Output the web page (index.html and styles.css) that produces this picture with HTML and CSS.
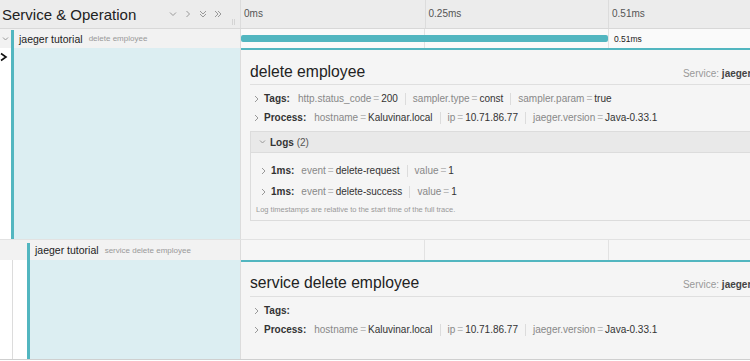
FILE: index.html
```html
<!DOCTYPE html>
<html lang="en">
<head>
    <meta charset="UTF-8">
    <title>Trace detail</title>
    <link rel="stylesheet" href="styles.css">
</head>
<body>
    <div class="trace">
        <!-- header -->
        <div class="row header">
            <div class="name-col">
                <span class="header-title">Service &amp; Operation</span>
                <span class="tools">
                    <svg width="8" height="8" viewBox="0 0 8 8"><path d="M1 2.5l3 3 3-3"/></svg>
                    <svg width="8" height="8" viewBox="0 0 8 8"><path d="M2.5 1l3 3-3 3"/></svg>
                    <svg width="8" height="8" viewBox="0 0 8 8"><path d="M1 1l3 3 3-3M1 4l3 3 3-3"/></svg>
                    <svg width="8" height="8" viewBox="0 0 8 8"><path d="M1 1l3 3-3 3M4 1l3 3-3 3"/></svg>
                </span>
                <span class="resizer"></span>
            </div>
            <div class="time-col ticks">
                <span class="tick">0ms</span>
                <span class="tick">0.25ms</span>
                <span class="tick">0.51ms</span>
            </div>
        </div>

        <!-- span 1 -->
        <div class="row span-row">
            <div class="name-col">
                <span class="toggle">
                    <svg width="7" height="6" viewBox="0 0 7 6"><path d="M1 1.5l2.5 2.5 2.5-2.5"/></svg>
                </span>
                <span class="accent"></span>
                <span class="svc">jaeger tutorial</span>
                <span class="op">delete employee</span>
            </div>
            <div class="time-col grid">
                <span class="bar" style="width: 367px"></span>
                <span class="bar-label">0.51ms</span>
            </div>
        </div>

        <div class="row detail-row">
            <div class="name-col detail-left">
                <span class="toggle open">
                    <svg width="8" height="10" viewBox="0 0 8 10"><path d="M1 1.5l5 3.5-5 3.5"/></svg>
                </span>
                <span class="accent"></span>
                <span class="fill"></span>
            </div>
            <div class="time-col panel">
                <div class="panel-inner">
                    <div class="panel-title">
                        <span class="op-title">delete employee</span>
                        <span class="service">Service: <b>jaeger tutorial</b></span>
                    </div>
                    <div class="kv-list">
                        <div class="kv-row">
                            <svg class="chev" width="5" height="8" viewBox="0 0 5 8"><path d="M1 1l3 3-3 3"/></svg>
                            <span class="kv-label">Tags:</span>
                            <span class="kv"><span class="k">http.status_code</span><span class="eq">=</span><span class="v">200</span></span>
                            <span class="kv"><span class="k">sampler.type</span><span class="eq">=</span><span class="v">const</span></span>
                            <span class="kv"><span class="k">sampler.param</span><span class="eq">=</span><span class="v">true</span></span>
                        </div>
                        <div class="kv-row">
                            <svg class="chev" width="5" height="8" viewBox="0 0 5 8"><path d="M1 1l3 3-3 3"/></svg>
                            <span class="kv-label">Process:</span>
                            <span class="kv"><span class="k">hostname</span><span class="eq">=</span><span class="v">Kaluvinar.local</span></span>
                            <span class="kv"><span class="k">ip</span><span class="eq">=</span><span class="v">10.71.86.77</span></span>
                            <span class="kv"><span class="k">jaeger.version</span><span class="eq">=</span><span class="v">Java-0.33.1</span></span>
                        </div>
                    </div>

                    <div class="logs">
                        <div class="logs-head">
                            <svg class="chev-down" width="7" height="6" viewBox="0 0 7 6"><path d="M1 1.5l2.5 2.5 2.5-2.5"/></svg>
                            <b>Logs</b>&nbsp;<span>(2)</span>
                        </div>
                        <div class="logs-body">
                            <div class="log-row">
                                <svg class="chev" width="5" height="8" viewBox="0 0 5 8"><path d="M1 1l3 3-3 3"/></svg>
                                <span class="kv-label">1ms:</span>
                                <span class="kv"><span class="k">event</span><span class="eq">=</span><span class="v">delete-request</span></span>
                                <span class="kv"><span class="k">value</span><span class="eq">=</span><span class="v">1</span></span>
                            </div>
                            <div class="log-row">
                                <svg class="chev" width="5" height="8" viewBox="0 0 5 8"><path d="M1 1l3 3-3 3"/></svg>
                                <span class="kv-label">1ms:</span>
                                <span class="kv"><span class="k">event</span><span class="eq">=</span><span class="v">delete-success</span></span>
                                <span class="kv"><span class="k">value</span><span class="eq">=</span><span class="v">1</span></span>
                            </div>
                            <div class="logs-note">Log timestamps are relative to the start time of the full trace.</div>
                        </div>
                    </div>
                </div>
            </div>
        </div>

        <!-- span 2 -->
        <div class="row span-row child">
            <div class="name-col">
                <span class="indent"></span>
                <span class="accent"></span>
                <span class="svc">jaeger tutorial</span>
                <span class="op">service delete employee</span>
            </div>
            <div class="time-col grid"></div>
        </div>

        <div class="row detail-row child last">
            <div class="name-col detail-left">
                <span class="indent"></span>
                <span class="accent"></span>
                <span class="fill"></span>
            </div>
            <div class="time-col panel">
                <div class="panel-inner">
                    <div class="panel-title">
                        <span class="op-title">service delete employee</span>
                        <span class="service">Service: <b>jaeger tutorial</b></span>
                    </div>
                    <div class="kv-list">
                        <div class="kv-row">
                            <svg class="chev" width="5" height="8" viewBox="0 0 5 8"><path d="M1 1l3 3-3 3"/></svg>
                            <span class="kv-label">Tags:</span>
                        </div>
                        <div class="kv-row">
                            <svg class="chev" width="5" height="8" viewBox="0 0 5 8"><path d="M1 1l3 3-3 3"/></svg>
                            <span class="kv-label">Process:</span>
                            <span class="kv"><span class="k">hostname</span><span class="eq">=</span><span class="v">Kaluvinar.local</span></span>
                            <span class="kv"><span class="k">ip</span><span class="eq">=</span><span class="v">10.71.86.77</span></span>
                            <span class="kv"><span class="k">jaeger.version</span><span class="eq">=</span><span class="v">Java-0.33.1</span></span>
                        </div>
                    </div>
                </div>
            </div>
        </div>
    </div>
</body>
</html>
```

FILE: styles.css
```css
* {
    box-sizing: border-box;
}

body {
    margin: 0;
    width: 750px;
    height: 361px;
    overflow: hidden;
    font-family: "Liberation Sans", Arial, sans-serif;
    color: #333;
    background: #fff;
}

.trace {
    width: 975px;
}

.row {
    display: flex;
}

.name-col {
    width: 241px;
    flex: none;
    display: flex;
    border-right: 1px solid #dcdcdc;
}

.time-col {
    flex: 1;
}

svg path {
    fill: none;
    stroke: #999;
    stroke-width: 1;
}

/* header */
.header {
    height: 29px;
    background: #ececec;
    border-bottom: 1px solid #d8d8d8;
}

.header .name-col {
    align-items: center;
    padding-left: 2px;
    position: relative;
}

.header-title {
    font-size: 15px;
    color: #222;
}

.tools {
    margin-left: auto;
    margin-right: 18px;
    display: flex;
    gap: 7px;
}

.resizer {
    position: absolute;
    right: 5px;
    top: 19px;
    width: 3px;
    height: 6px;
    border-left: 1px solid #d4d4d4;
    border-right: 1px solid #d4d4d4;
}

.ticks {
    display: flex;
}

.tick {
    width: 183.5px;
    flex: none;
    padding-left: 3px;
    font-size: 10px;
    line-height: 28px;
    color: #555;
}

.tick + .tick {
    border-left: 1px solid #dcdcdc;
}

/* span rows */
.span-row {
    height: 19px;
}

.span-row .name-col {
    background: #f2f2f2;
    align-items: center;
}

.toggle {
    width: 11px;
    height: 100%;
    flex: none;
    display: flex;
    align-items: center;
    padding-left: 2px;
}

.accent {
    width: 3px;
    height: 100%;
    flex: none;
    background: #52b6c0;
}

.span-row .accent {
    align-self: flex-end;
    height: 18px;
}

.svc {
    padding-left: 5px;
    font-size: 10.5px;
    color: #222;
}

.op {
    padding-left: 6px;
    font-size: 8px;
    color: #999;
}

.grid {
    display: flex;
    align-items: center;
    background-color: #fafafa;
    background-image: repeating-linear-gradient(90deg, transparent 0 183px, #e2e2e2 183px 184px);
}

.bar {
    height: 7px;
    border-radius: 2px;
    background: #52b6c0;
}

.bar-label {
    margin-left: 6px;
    font-size: 8.5px;
    color: #222;
}

/* detail rows */
.detail-left {
    background: #fff;
    align-items: stretch;
}

.toggle.open {
    padding-left: 0;
    align-items: flex-start;
    padding-top: 4px;
}

.toggle.open path {
    stroke: #111;
    stroke-width: 1.6;
}

.fill {
    flex: 1;
    background: #dceef2;
}

.panel {
    background: #f5f5f5;
    border-top: 2px solid #52b6c0;
    padding: 0 0 18px 9px;
}

.panel-inner {
    width: 538px;
}

.panel-title {
    display: flex;
    align-items: baseline;
    justify-content: space-between;
    padding: 12px 0 2px;
    border-bottom: 1px solid #dfdfdf;
}

.op-title {
    font-size: 15.7px;
    line-height: 20px;
    color: #222;
}

.service {
    font-size: 10px;
    color: #999;
}

.service b {
    color: #444;
}

.kv-list {
    padding-top: 4px;
}

.kv-row,
.log-row {
    display: flex;
    align-items: center;
    font-size: 10px;
    white-space: nowrap;
}

.kv-row {
    height: 19px;
}

.kv-row .chev {
    margin-left: 4px;
    margin-right: 5px;
}

.kv-label {
    font-weight: bold;
    color: #333;
    margin-right: 8px;
}

.kv {
    padding: 0 7px;
    line-height: 12px;
}

.kv:nth-child(3) {
    padding-left: 0;
}

.kv + .kv {
    border-left: 1px solid #dcdcdc;
}

.k {
    color: #888;
}

.eq {
    color: #bbb;
    margin: 0 2px;
}

.v {
    color: #333;
}

/* logs */
.logs {
    margin-top: 4px;
    border: 1px solid #dcdcdc;
}

.logs-head {
    height: 21px;
    display: flex;
    align-items: center;
    padding-left: 8px;
    background: #e9e9e9;
    border-bottom: 1px solid #dcdcdc;
    font-size: 10px;
}

.logs-head .chev-down {
    margin-right: 4px;
}

.logs-head span {
    color: #555;
}

.logs-body {
    padding: 7px 0 5px;
}

.log-row {
    height: 21px;
}

.log-row .chev {
    margin-left: 10px;
    margin-right: 5px;
}

.log-row .kv-label {
    margin-right: 7px;
}

.logs-note {
    margin-top: 3px;
    padding-left: 5px;
    font-size: 7.5px;
    line-height: 10px;
    color: #999;
}

/* child span */
.child .indent {
    width: 13px;
    flex: none;
    border-right: 1px solid #dcdcdc;
    margin-right: 14px;
}

.span-row.child {
    border-top: 1px solid #e2e2e2;
    height: 21px;
}

.span-row.child .accent {
    height: 17px;
}

.span-row.child .grid {
    background-color: #f6f6f6;
}

.detail-row.last {
    border-bottom: 1px solid #cfcfcf;
}

.detail-row.last .panel-title {
    padding: 11px 0 3px;
}

.detail-row.last .panel {
    padding-bottom: 20px;
}
```
